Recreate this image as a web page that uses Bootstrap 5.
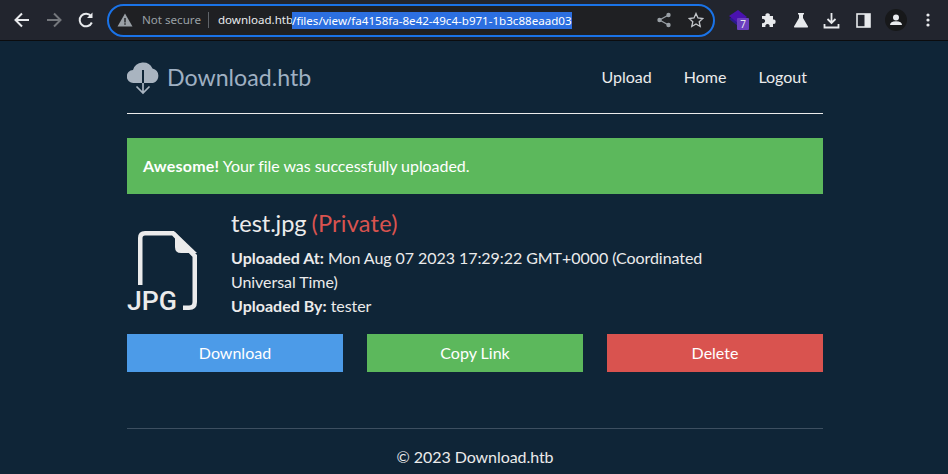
<!DOCTYPE html>
<html lang="en">
<head>
<meta charset="utf-8">
<title>Download.htb</title>
<link href="https://cdn.jsdelivr.net/npm/bootstrap@5.3.0/dist/css/bootstrap.min.css" rel="stylesheet">
<style>
html,body{height:474px;overflow:hidden}
body{background:#0f2537;font-family:"Lato","Liberation Sans",sans-serif;color:#ebebeb;font-size:16px}
.chrome-bar{height:41px;background:#22252e;border-bottom:1px solid #0b0c0e;padding-left:12px}
.chrome-btn{width:20px;height:20px;display:block;flex:none}
.omni{margin-left:11px;width:608px;height:33px;border:2px solid #1a73e8;border-radius:17px;background:#1f2023;font-family:"Noto Sans",sans-serif;font-size:11.6px;color:#e8eaed;padding-left:8px}
.omni-warn{color:#9aa0a6;margin:0 7px 0 9px}
.omni-sep{width:1px;height:16px;background:#5f6368;margin-right:9px}
.omni-url{font-size:11.55px}
.omni-sel{background:#2c6fe0;color:#fff;line-height:17px;margin-left:-1px;font-size:11.58px}
.omni-end{padding-right:9px}
.ext-row{margin-left:12px}
.shell{width:696px;margin:0 0 0 127px}
.site-head{height:73px;border-bottom:1px solid #ebebeb}
.site-brand{font-size:23.2px;color:#9fb0c2;margin-left:4px;line-height:1;padding-top:1px}
.site-link{color:#ebebeb;font-size:16px;text-decoration:none;margin-left:32px}
.site-links{padding-right:16px}
.ok-box{margin-top:24px;height:56px;background:#5cb85c;color:#fff;padding-left:16px;letter-spacing:-.055px}
.ok-box strong{letter-spacing:.22px}
.file-row{margin-top:15px;height:125px}
.file-icon{width:104px;flex:none;padding-top:21px}
.file-info{width:490px;line-height:24px;letter-spacing:-.06px}
.file-info strong{letter-spacing:.01px}
.file-title{font-size:23.6px;font-weight:400;line-height:28px;margin:0 0 9px;color:#ebebeb;letter-spacing:-.1px;word-spacing:-1px}
.file-private{color:#d9534f;letter-spacing:.2px}
.act-row{gap:24px}
.act-btn{flex:1 1 0;height:38px;border:0;border-radius:0;color:#fff;font-size:16px;line-height:38px;padding:0}
.act-blue{background:#4c9be8}
.act-green{background:#5cb85c}
.act-red{background:#d9534f}
.act-blue:hover{background:#4c9be8;color:#fff}
.act-green:hover{background:#5cb85c;color:#fff}
.act-red:hover{background:#d9534f;color:#fff}
.site-foot{margin-top:56px;border-top:1px solid #3d4f60;padding-top:18px;text-align:center;line-height:20px;letter-spacing:-.06px}
</style>
</head>
<body>
<div class="chrome-bar d-flex align-items-center">
  <svg class="chrome-btn" viewBox="0 0 20 20" fill="none" stroke="#e8eaed" stroke-width="2"><path d="M17 10H4M10 3.500 3.500 10l6.500 6.500"/></svg>
  <svg class="chrome-btn" style="margin-left:12px" viewBox="0 0 20 20" fill="none" stroke="#74777c" stroke-width="2"><path d="M3 10h13M10 3.500 16.500 10 10 16.500"/></svg>
  <svg class="chrome-btn" style="margin-left:12px" viewBox="0 0 20 20" fill="none" stroke="#e8eaed" stroke-width="2"><path d="M15.800 12.500A6.300 6.300 0 1 1 15 6.200"/><path d="M16.500 2.500v5.500H11z" fill="#e8eaed" stroke="none"/></svg>
  <div class="omni d-flex align-items-center">
    <svg width="16" height="16" viewBox="0 0 16 16"><path d="M8 1.500 15.500 14.500H.5z" fill="#9aa0a6"/><path d="M7.300 6h1.400v4.500H7.300zM7.300 11.300h1.400v1.400H7.300z" fill="#202124"/></svg>
    <span class="omni-warn">Not secure</span><span class="omni-sep"></span><span class="omni-url">download.htb</span><span class="omni-sel">/files/view/fa4158fa-8e42-49c4-b971-1b3c88eaad03</span>
    <span class="omni-end ms-auto d-flex align-items-center gap-3">
      <svg width="16" height="16" viewBox="0 0 16 16" fill="#9aa0a6"><circle cx="12.500" cy="3" r="2.200"/><circle cx="12.500" cy="13" r="2.200"/><circle cx="3.500" cy="8" r="2.200"/><path d="M3.500 8 12.500 3M3.500 8l9 5" stroke="#9aa0a6" stroke-width="1.300"/></svg>
      <svg width="16" height="16" viewBox="0 0 16 16" fill="none" stroke="#c4c7cb" stroke-width="1.300"><path d="m8 1.500 2 4.500 4.800.5-3.600 3.200 1 4.800L8 12l-4.200 2.500 1-4.800L1.200 6.500 6 6z"/></svg>
    </span>
  </div>
  <div class="ext-row d-flex align-items-center">
    <svg width="24" height="24" viewBox="0 0 24 24"><path d="m2 11 9-6 9 7-9 6z" fill="#2a1a8c"/><path d="m2 8 9-6 9 7-9 6z" fill="#4a12b0"/><rect x="10" y="10" width="12" height="12" rx="1" fill="#6b3fbf"/><text x="16" y="20" font-size="10" fill="#e8eaed" text-anchor="middle" font-family="Noto Sans">7</text></svg>
    <svg style="margin-left:10px" width="17" height="17" viewBox="0 0 17 17" fill="#e8eaed"><path d="M1 4h3.500a2.200 2.200 0 1 1 4.300 0H12v3.500a2.200 2.200 0 1 1 0 4.300V15H8.500a2.200 2.200 0 1 0-4 0H1v-4a2.200 2.200 0 1 0 0-4z"/></svg>
    <svg style="margin-left:15px" width="16" height="16" viewBox="0 0 16 16" fill="#e8eaed"><path d="M5 1h6v1.500h-1V6l5 8.500q.3 1-.7 1H1.700q-1 0-.7-1L6 6V2.500H5z"/></svg>
    <svg style="margin-left:14px" width="17" height="17" viewBox="0 0 17 17" fill="none" stroke="#e8eaed" stroke-width="1.800"><path d="M8.500 1v10M4.500 7l4 4 4-4M1.500 12v3.500h14V12"/></svg>
    <svg style="margin-left:16px" width="15" height="15" viewBox="0 0 15 15"><rect x="1" y="1" width="13" height="13" fill="none" stroke="#e8eaed" stroke-width="1.600"/><rect x="8.500" y="1" width="5.500" height="13" fill="#e8eaed"/></svg>
    <svg style="margin-left:14px" width="22" height="22" viewBox="0 0 22 22"><circle cx="11" cy="11" r="11" fill="#17181a"/><circle cx="11" cy="8.500" r="3" fill="#e8eaed"/><path d="M5 16q0-3.800 6-3.800t6 3.800z" fill="#e8eaed"/></svg>
    <svg style="margin-left:19px" width="4" height="14" viewBox="0 0 4 14" fill="#e8eaed"><circle cx="2" cy="2" r="1.600"/><circle cx="2" cy="7" r="1.600"/><circle cx="2" cy="12" r="1.600"/></svg>
  </div>
</div>
<div class="shell">
  <header class="site-head d-flex align-items-center">
    <svg width="36" height="35" viewBox="0 0 36 35"><path d="M6.500 23a6.500 6.500 0 0 1-.5-13A10.500 10.500 0 0 1 25.500 8.500a7.500 7.500 0 0 1 .5 14.500z" fill="#a9b4c0"/><path d="M16 10v13" fill="none" stroke="#0f2537" stroke-width="2"/><path d="M16 23v9M9.500 26.500 16 33l6.500-6.500" fill="none" stroke="#a9b4c0" stroke-width="1.700"/></svg>
    <span class="site-brand">Download.htb</span>
    <nav class="site-links ms-auto d-flex">
      <a class="site-link" href="#">Upload</a><a class="site-link" href="#">Home</a><a class="site-link" href="#">Logout</a>
    </nav>
  </header>
  <div class="ok-box d-flex align-items-center"><span><strong>Awesome!</strong> <span>Your file was successfully uploaded.</span></span></div>
  <div class="file-row d-flex">
    <div class="file-icon">
      <svg width="72" height="84" viewBox="0 0 72 84"><path d="M13.250 55V8q0-4.750 4.750-4.750H46L67.750 26V72q0 5.750-5.750 5.750H56" fill="none" stroke="#ebebeb" stroke-width="4.500"/><path d="M48 2v15q0 6 6 6h16z" fill="#ebebeb"/><text x="0" y="80" font-family="Roboto,sans-serif" font-weight="500" font-size="26" fill="#ebebeb" textLength="50" lengthAdjust="spacingAndGlyphs">JPG</text></svg>
    </div>
    <div class="file-info">
      <h1 class="file-title"><span>test.jpg</span> <span class="file-private">(Private)</span></h1>
      <div><strong>Uploaded At:</strong> <span>Mon Aug 07 2023 17:29:22 GMT+0000 (Coordinated Universal Time)</span></div>
      <div><strong>Uploaded By:</strong> <span>tester</span></div>
    </div>
  </div>
  <div class="act-row d-flex">
    <a class="btn act-btn act-blue" href="#">Download</a>
    <a class="btn act-btn act-green" href="#">Copy Link</a>
    <a class="btn act-btn act-red" href="#">Delete</a>
  </div>
  <footer class="site-foot">© 2023 Download.htb</footer>
</div>
<script src="https://cdn.jsdelivr.net/npm/bootstrap@5.3.0/dist/js/bootstrap.bundle.min.js"></script>
</body>
</html>
